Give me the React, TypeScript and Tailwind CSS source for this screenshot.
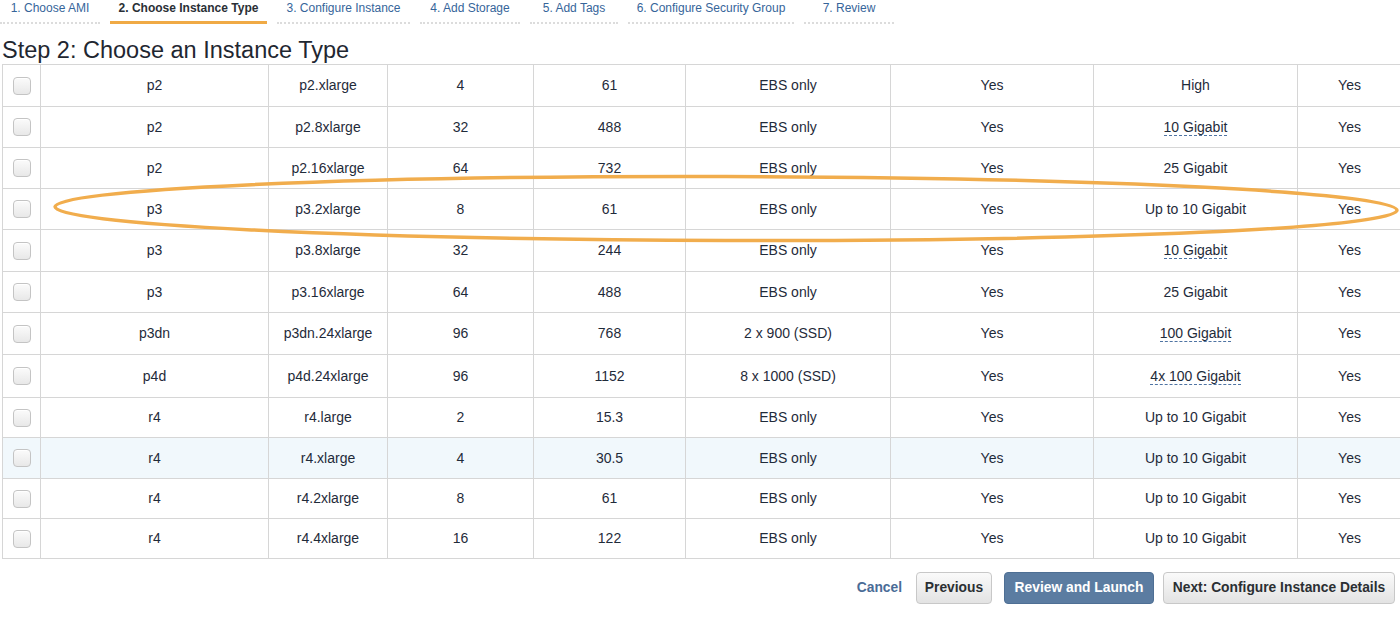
import React from "react";

type Row = {
  fam: string;
  type: string;
  cpu: string;
  mem: string;
  storage: string;
  ebs: string;
  net: string;
  dashed?: boolean;
  ipv6: string;
  hl?: boolean;
  h?: string;
};

const rows: Row[] = [
  { fam: "p2", type: "p2.xlarge", cpu: "4", mem: "61", storage: "EBS only", ebs: "Yes", net: "High", ipv6: "Yes", h: "h-[42px]" },
  { fam: "p2", type: "p2.8xlarge", cpu: "32", mem: "488", storage: "EBS only", ebs: "Yes", net: "10 Gigabit", dashed: true, ipv6: "Yes" },
  { fam: "p2", type: "p2.16xlarge", cpu: "64", mem: "732", storage: "EBS only", ebs: "Yes", net: "25 Gigabit", ipv6: "Yes" },
  { fam: "p3", type: "p3.2xlarge", cpu: "8", mem: "61", storage: "EBS only", ebs: "Yes", net: "Up to 10 Gigabit", ipv6: "Yes" },
  { fam: "p3", type: "p3.8xlarge", cpu: "32", mem: "244", storage: "EBS only", ebs: "Yes", net: "10 Gigabit", dashed: true, ipv6: "Yes", h: "h-[42px]" },
  { fam: "p3", type: "p3.16xlarge", cpu: "64", mem: "488", storage: "EBS only", ebs: "Yes", net: "25 Gigabit", ipv6: "Yes" },
  { fam: "p3dn", type: "p3dn.24xlarge", cpu: "96", mem: "768", storage: "2 x 900 (SSD)", ebs: "Yes", net: "100 Gigabit", dashed: true, ipv6: "Yes", h: "h-[42px]" },
  { fam: "p4d", type: "p4d.24xlarge", cpu: "96", mem: "1152", storage: "8 x 1000 (SSD)", ebs: "Yes", net: "4x 100 Gigabit", dashed: true, ipv6: "Yes", h: "h-[43px]" },
  { fam: "r4", type: "r4.large", cpu: "2", mem: "15.3", storage: "EBS only", ebs: "Yes", net: "Up to 10 Gigabit", ipv6: "Yes", h: "h-[40px]" },
  { fam: "r4", type: "r4.xlarge", cpu: "4", mem: "30.5", storage: "EBS only", ebs: "Yes", net: "Up to 10 Gigabit", ipv6: "Yes", hl: true },
  { fam: "r4", type: "r4.2xlarge", cpu: "8", mem: "61", storage: "EBS only", ebs: "Yes", net: "Up to 10 Gigabit", ipv6: "Yes", h: "h-[40px]" },
  { fam: "r4", type: "r4.4xlarge", cpu: "16", mem: "122", storage: "EBS only", ebs: "Yes", net: "Up to 10 Gigabit", ipv6: "Yes", h: "h-[40px]" },
];

const tabs = [
  { label: "1. Choose AMI", w: "w-[100px]", active: false },
  { label: "2. Choose Instance Type", w: "w-[157px]", active: true },
  { label: "3. Configure Instance", w: "w-[133px]", active: false },
  { label: "4. Add Storage", w: "w-[100px]", active: false },
  { label: "5. Add Tags", w: "w-[88px]", active: false },
  { label: "6. Configure Security Group", w: "w-[166px]", active: false },
  { label: "7. Review", w: "w-[90px]", active: false },
];

function Cell({ children, last }: { children?: React.ReactNode; last?: boolean }) {
  return (
    <div
      className={
        "flex items-center justify-center border-b border-[#d6d6d6] " +
        (last ? "" : "border-r")
      }
    >
      {children}
    </div>
  );
}

export default function App() {
  return (
    <div className="relative w-[1400px] h-[624px] overflow-hidden bg-white font-['Liberation_Sans',Arial,sans-serif]">
      {/* Wizard tabs */}
      <div className="flex gap-[10px]">
        {tabs.map((t) => (
          <div
            key={t.label}
            className={
              "h-[24px] flex justify-center text-[12px] leading-[16px] " +
              t.w +
              (t.active
                ? " border-b-[3px] border-[#f0aa45] font-bold text-[#2a2f36]"
                : " border-b-2 border-dotted border-[#dcdcdc] text-[#36659a]")
            }
          >
            <span>{t.label}</span>
          </div>
        ))}
      </div>

      {/* Heading */}
      <div className="pl-[2px] pt-[12px] h-[40px] text-[23.5px] leading-[28px] text-[#1f2731]">
        Step 2: Choose an Instance Type
      </div>

      {/* Table */}
      <div className="ml-[2px] w-[1420px] border-t border-l border-[#d6d6d6] text-[14px] text-[#1f2b3a]">
        {rows.map((r, i) => (
          <div
            key={i}
            className={
              "grid grid-cols-[38px_228px_119px_146px_152px_205px_203px_204px_1fr] " +
              (r.h ?? "h-[41px]") +
              (r.hl ? " bg-[#f1f8fc]" : " bg-white")
            }
          >
            <Cell>
              <div className="w-[18px] h-[18px] rounded-[4px] border border-[#c4c4c4] bg-gradient-to-b from-[#fbfbfb] to-[#e8e8e8] shadow-[inset_0_1px_0_#ffffff]" />
            </Cell>
            <Cell>{r.fam}</Cell>
            <Cell>{r.type}</Cell>
            <Cell>{r.cpu}</Cell>
            <Cell>{r.mem}</Cell>
            <Cell>{r.storage}</Cell>
            <Cell>{r.ebs}</Cell>
            <Cell>
              {r.dashed ? (
                <span className="border-b border-dashed border-[#4f74a3] leading-[16px]">{r.net}</span>
              ) : (
                r.net
              )}
            </Cell>
            <Cell last>
              <span className="pr-[21px]">{r.ipv6}</span>
            </Cell>
          </div>
        ))}
      </div>

      {/* Footer buttons */}
      <div className="flex justify-end items-center pr-[5px] mt-[13px] text-[13.8px] font-bold">
        <button className="text-[#4a6c97] mr-[14px]">Cancel</button>
        <button className="h-[32px] w-[76px] rounded-[4px] border border-[#c8c8c8] bg-gradient-to-b from-[#fafafa] to-[#e3e3e3] text-[#2b2f33] mr-[12px]">
          Previous
        </button>
        <button className="h-[32px] w-[150px] rounded-[4px] border border-[#4e6f94] bg-[#5b7ca1] text-white mr-[9px]">
          Review and Launch
        </button>
        <button className="h-[32px] w-[232px] rounded-[4px] border border-[#c8c8c8] bg-gradient-to-b from-[#fafafa] to-[#e3e3e3] text-[#2b2f33]">
          Next: Configure Instance Details
        </button>
      </div>

      {/* Hand-drawn highlight ellipse */}
      <svg
        className="absolute left-0 top-0 pointer-events-none"
        width="1400"
        height="624"
        viewBox="0 0 1400 624"
      >
        <ellipse
          cx="726"
          cy="208.5"
          rx="671"
          ry="32"
          transform="rotate(0.15 726 208.5)"
          fill="none"
          stroke="#f1ad4d"
          strokeWidth="3.5"
        />
      </svg>
    </div>
  );
}
